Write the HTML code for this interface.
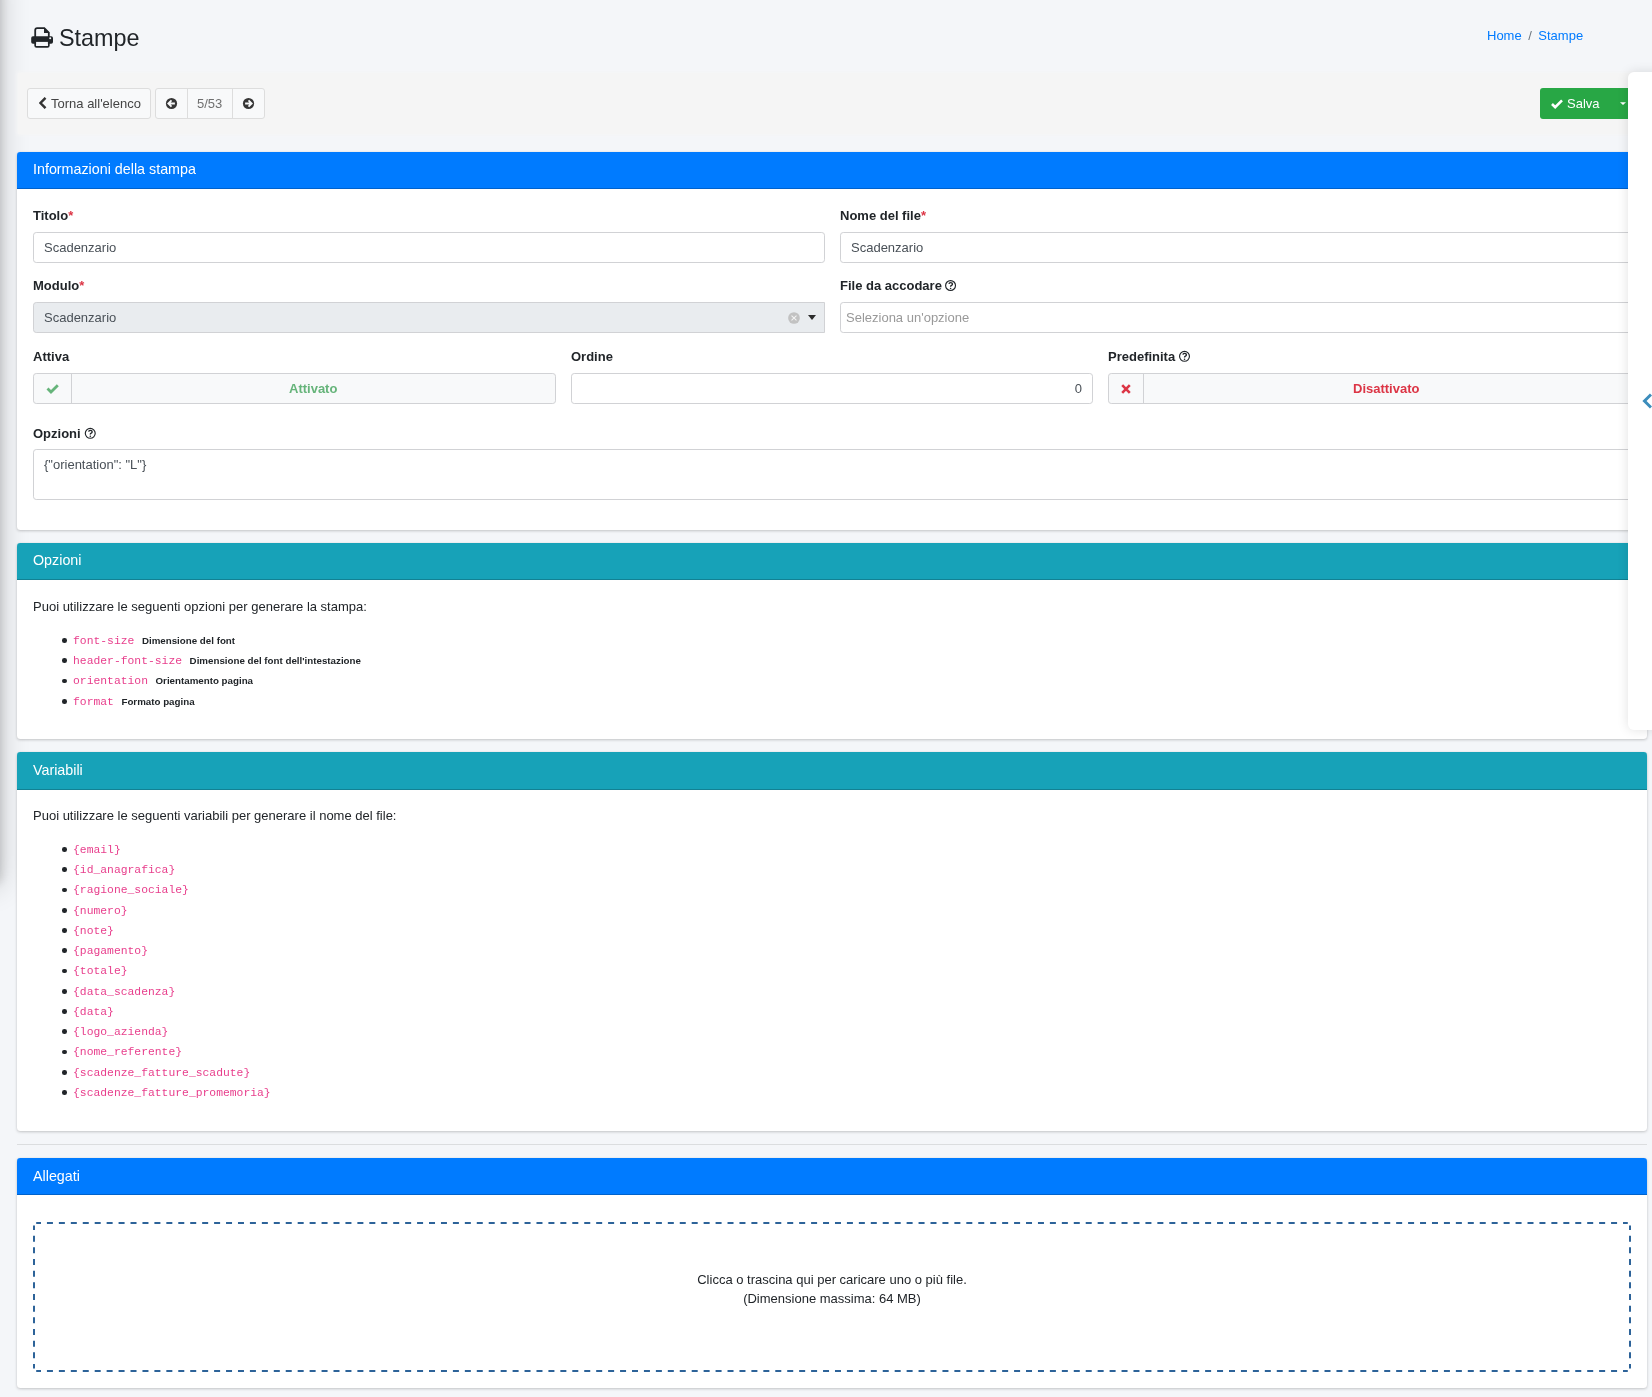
<!DOCTYPE html>
<html><head><meta charset="utf-8">
<style>
html,body{margin:0;padding:0}
body{width:1652px;height:1397px;overflow:hidden;position:relative;background:#f4f6f9;font-family:"Liberation Sans",sans-serif;font-size:13px;line-height:19.5px;color:#212529}
.a{position:absolute;white-space:nowrap}
.sidebar-shadow{position:absolute;left:-300px;top:-40px;width:300px;height:912px;background:#fff;box-shadow:0 14px 28px rgba(0,0,0,.2),0 10px 10px rgba(0,0,0,.18)}
.toolbar{position:absolute;left:18px;top:73px;width:1620px;height:61px;background:#f5f5f5;box-shadow:0 0 3px 1px #f5f5f5}
.btn{position:absolute;box-sizing:border-box;border:1px solid #ddd;border-radius:3px;background:#f8f9fa;color:#444;height:31px}
.card{position:absolute;left:17px;width:1630px;background:#fff;border-radius:3.25px;box-shadow:0 0 1px rgba(0,0,0,.125),0 1px 3px rgba(0,0,0,.2);overflow:hidden}
.ch{position:absolute;left:0;top:0;right:0;height:36px;border-bottom:1px solid rgba(0,0,0,.2);color:#fff;font-size:14.3px;line-height:17px}
.ch span{position:absolute;left:16px;top:9px}
.blue{background:#007bff}.teal{background:#17a2b8}
.lbl{position:absolute;font-weight:700;white-space:nowrap}
.req{color:#dc3545}
.inp{position:absolute;box-sizing:border-box;height:31px;border:1px solid #d1d2d5;border-radius:3.25px;background:#fff;color:#495057}
.inp span{position:absolute;left:10px;top:5px;white-space:nowrap}
code{font-family:"Liberation Mono",monospace;font-size:11.375px;color:#e83e8c}
.badge{font-weight:700;font-size:9.75px;padding:0 3.9px;color:#212529}
ul.l{position:absolute;left:33px;margin:0;padding:0 0 0 40px;list-style:none}
ul.l li{height:20.25px;line-height:20.25px;position:relative}
ul.l li::before{content:"";position:absolute;left:-11px;top:7.7px;width:4.6px;height:4.6px;border-radius:50%;background:#212529}
.help{display:inline-block;vertical-align:middle}
ul.o li::before{top:8.45px}
</style></head><body>
<div id="root" style="position:absolute;left:0;top:0;width:1652px;height:1397px;will-change:transform">
<div class="sidebar-shadow"></div>

<!-- title -->
<svg class="a" style="left:31px;top:27px" width="23" height="21" viewBox="0 0 23 21">
  <path d="M4.2 10.5V3.2Q4.2 1.2 6.2 1.2H13.3L17.8 5.7V10.5" fill="none" stroke="#212529" stroke-width="1.8"/>
  <path d="M13 0.6L18.4 6H13z" fill="#212529"/>
  <rect x="0.2" y="9.3" width="21.8" height="7.5" rx="1.8" fill="#212529"/>
  <circle cx="19.2" cy="11.3" r="1" fill="#f4f6f9"/>
  <rect x="4.2" y="14" width="13.6" height="5.8" rx="1.3" fill="none" stroke="#212529" stroke-width="1.8"/>
  <rect x="5.1" y="14.9" width="11.8" height="4" fill="#f4f6f9"/>
</svg>
<div class="a" style="left:59px;top:24px;font-size:23.4px;line-height:28px">Stampe</div>
<div class="a" style="left:1487px;top:26px;color:#007bff">Home<span style="color:#6c757d;padding:0 6.5px">/</span>Stampe</div>

<div class="toolbar"></div>
<!-- toolbar buttons -->
<div class="btn" style="left:27px;top:88px;width:124px"></div>
<svg class="a" style="left:39px;top:97px" width="8" height="12" viewBox="0 0 8 12"><path d="M6.5 0.8L1.5 6l5 5.2" fill="none" stroke="#333" stroke-width="2.4"/></svg>
<div class="a" style="left:51px;top:94px;color:#444">Torna all'elenco</div>

<div class="btn" style="left:155px;top:88px;width:110px"></div>
<div class="a" style="left:187px;top:89px;width:1px;height:29px;background:#ddd"></div>
<div class="a" style="left:232px;top:89px;width:1px;height:29px;background:#ddd"></div>
<svg class="a" style="left:165px;top:97px" width="13" height="13" viewBox="0 0 13 13"><circle cx="6.5" cy="6.5" r="5.6" fill="#363636"/><path d="M9.9 6.5H4.4M6.5 3.3L3.3 6.5l3.2 3.2" fill="none" stroke="#f8f9fa" stroke-width="1.8"/></svg>
<div class="a" style="left:197px;top:94px;color:#707070">5/53</div>
<svg class="a" style="left:242px;top:97px" width="13" height="13" viewBox="0 0 13 13"><circle cx="6.5" cy="6.5" r="5.6" fill="#363636"/><path d="M3.1 6.5H8.6M6.5 3.3l3.2 3.2-3.2 3.2" fill="none" stroke="#f8f9fa" stroke-width="1.8"/></svg>

<div class="a" style="left:1540px;top:88px;width:100px;height:31px;background:#28a745;border-radius:3px"></div>
<svg class="a" style="left:1551px;top:99px" width="12" height="10" viewBox="0 0 12 10"><path d="M1 5l3.2 3.2L11 1.4" fill="none" stroke="#fff" stroke-width="2.6"/></svg>
<div class="a" style="left:1567px;top:94px;color:#fff">Salva</div>
<svg class="a" style="left:1619px;top:101px" width="8" height="5" viewBox="0 0 8 5"><path d="M1 1.2h6L4 4.1z" fill="#fff"/></svg>

<!-- CARD 1 -->
<div class="card" style="top:152px;height:378px">
  <div class="ch blue"><span>Informazioni della stampa</span></div>
</div>
<div class="lbl" style="left:33px;top:206px">Titolo<span class="req">*</span></div>
<div class="inp" style="left:33px;top:232px;width:792px"><span>Scadenzario</span></div>
<div class="lbl" style="left:840px;top:206px">Nome del file<span class="req">*</span></div>
<div class="inp" style="left:840px;top:232px;width:792px"><span>Scadenzario</span></div>

<div class="lbl" style="left:33px;top:276px">Modulo<span class="req">*</span></div>
<div class="inp" style="left:33px;top:302px;width:792px;background:#e9ecef;border-radius:3.25px 0 0 3.25px"><span>Scadenzario</span></div>
<svg class="a" style="left:787px;top:311px" width="14" height="14" viewBox="0 0 14 14"><circle cx="7" cy="7" r="5.85" fill="#c2c2c2"/><path d="M4.5 4.6l5 4.8M9.5 4.6l-5 4.8" stroke="#f4f4f4" stroke-width="1.05"/></svg>
<svg class="a" style="left:808px;top:314px" width="9" height="7" viewBox="0 0 9 7"><path d="M0 1h8L4 6.1z" fill="#2b2b2b"/></svg>

<div class="lbl" style="left:840px;top:276px">File da accodare</div>
<div class="inp" style="left:840px;top:302px;width:792px"><span style="left:5px;color:#999">Seleziona un'opzione</span></div>

<div class="lbl" style="left:33px;top:347px">Attiva</div>
<div class="inp" style="left:33px;top:373px;width:523px;background:#f8f9fa"></div>
<div class="a" style="left:71px;top:374px;width:1px;height:29px;background:#d1d2d5"></div>
<svg class="a" style="left:46px;top:383px" width="13" height="11" viewBox="0 0 13 11"><path d="M1.5 5.5l3.5 3.5 6.8-6.8" fill="none" stroke="#66b47a" stroke-width="2.8"/></svg>
<div class="a" style="left:289px;top:379px;font-weight:700;color:#66b47a">Attivato</div>

<div class="lbl" style="left:571px;top:347px">Ordine</div>
<div class="inp" style="left:571px;top:373px;width:522px"><span style="left:auto;right:10px">0</span></div>

<div class="lbl" style="left:1108px;top:347px">Predefinita</div>
<div class="inp" style="left:1108px;top:373px;width:530px;background:#f8f9fa"></div>
<div class="a" style="left:1143px;top:374px;width:1px;height:29px;background:#d1d2d5"></div>
<svg class="a" style="left:1121px;top:384px" width="10" height="10" viewBox="0 0 10 10"><path d="M1.2 1.2l7.6 7.6M8.8 1.2L1.2 8.8" stroke="#dc3545" stroke-width="2.6"/></svg>
<div class="a" style="left:1353px;top:379px;font-weight:700;color:#dc3545">Disattivato</div>

<div class="lbl" style="left:33px;top:424px">Opzioni</div>
<div class="inp" style="left:33px;top:449px;width:1605px;height:51px"><span>{"orientation": "L"}</span></div>


<!-- help icons -->
<svg class="a" style="left:944px;top:279px" width="13" height="13" viewBox="0 0 13 13"><circle cx="6.55" cy="6.5" r="4.95" fill="none" stroke="#212529" stroke-width="1.15"/><path d="M4.95 4.90Q5.15 3.60 6.65 3.60Q8.45 3.60 8.45 5.00Q8.45 5.90 7.45 6.40Q6.60 6.80 6.60 7.80" fill="none" stroke="#212529" stroke-width="1.4"/><circle cx="6.60" cy="9.45" r=".78" fill="#212529"/></svg>
<svg class="a" style="left:1178px;top:350px" width="13" height="13" viewBox="0 0 13 13"><circle cx="6.5" cy="6.3" r="4.95" fill="none" stroke="#212529" stroke-width="1.15"/><path d="M4.90 4.70Q5.10 3.40 6.60 3.40Q8.40 3.40 8.40 4.80Q8.40 5.70 7.40 6.20Q6.55 6.60 6.55 7.60" fill="none" stroke="#212529" stroke-width="1.4"/><circle cx="6.55" cy="9.25" r=".78" fill="#212529"/></svg>
<svg class="a" style="left:84px;top:427px" width="13" height="13" viewBox="0 0 13 13"><circle cx="6.25" cy="6.3" r="4.95" fill="none" stroke="#212529" stroke-width="1.15"/><path d="M4.65 4.70Q4.85 3.40 6.35 3.40Q8.15 3.40 8.15 4.80Q8.15 5.70 7.15 6.20Q6.30 6.60 6.30 7.60" fill="none" stroke="#212529" stroke-width="1.4"/><circle cx="6.30" cy="9.25" r=".78" fill="#212529"/></svg>

<!-- CARD 2 -->
<div class="card" style="top:543px;height:196px">
  <div class="ch teal"><span>Opzioni</span></div>
</div>
<div class="a" style="left:33px;top:597px">Puoi utilizzare le seguenti opzioni per generare la stampa:</div>
<ul class="l o" style="top:629.75px">
<li><code>font-size</code> <span class="badge">Dimensione del font</span></li>
<li><code>header-font-size</code> <span class="badge">Dimensione del font dell'intestazione</span></li>
<li><code>orientation</code> <span class="badge">Orientamento pagina</span></li>
<li><code>format</code> <span class="badge">Formato pagina</span></li>
</ul>

<!-- CARD 3 -->
<div class="card" style="top:752px;height:379px">
  <div class="ch teal" style="height:37px"><span style="top:10px">Variabili</span></div>
</div>
<div class="a" style="left:33px;top:806px">Puoi utilizzare le seguenti variabili per generare il nome del file:</div>
<ul class="l o" style="top:838.75px">
<li><code>{email}</code></li>
<li><code>{id_anagrafica}</code></li>
<li><code>{ragione_sociale}</code></li>
<li><code>{numero}</code></li>
<li><code>{note}</code></li>
<li><code>{pagamento}</code></li>
<li><code>{totale}</code></li>
<li><code>{data_scadenza}</code></li>
<li><code>{data}</code></li>
<li><code>{logo_azienda}</code></li>
<li><code>{nome_referente}</code></li>
<li><code>{scadenze_fatture_scadute}</code></li>
<li><code>{scadenze_fatture_promemoria}</code></li>
</ul>

<div class="a" style="left:17px;top:1144px;width:1630px;height:1px;background:rgba(0,0,0,.1)"></div>

<!-- CARD 4 -->
<div class="card" style="top:1158px;height:230px">
  <div class="ch blue"><span style="top:10px">Allegati</span></div>
</div>
<svg class="a" style="left:33px;top:1222px" width="1598" height="150" viewBox="0 0 1598 150"><g fill="none" stroke="#2d6399" stroke-width="2">
<path d="M3.2 1H1594.8" stroke-dasharray="6 5.94" stroke-dashoffset="1.2"/>
<path d="M3.2 149H1594.8" stroke-dasharray="6 5.94" stroke-dashoffset="1.2"/>
<path d="M1 3.4V146.6" stroke-dasharray="6 5.667" stroke-dashoffset="1.4"/>
<path d="M1597 3.4V146.6" stroke-dasharray="6 5.667" stroke-dashoffset="1.4"/>
</g></svg>
<div class="a" style="left:33px;top:1269.5px;width:1598px;text-align:center;color:#212529">Clicca o trascina qui per caricare uno o più file.<br>(Dimensione massima: 64 MB)</div>

<!-- right control panel -->
<div class="a" style="left:1628px;top:72px;width:40px;height:658px;background:#fff;border-radius:6px;box-shadow:0 0 12px rgba(0,0,0,.12)"></div>
<svg class="a" style="left:1642px;top:393px" width="10" height="16" viewBox="0 0 10 16"><path d="M9 1.5L2.5 8 9 14.5" fill="none" stroke="#3c8dbc" stroke-width="3"/></svg>
</div>
</body></html>
